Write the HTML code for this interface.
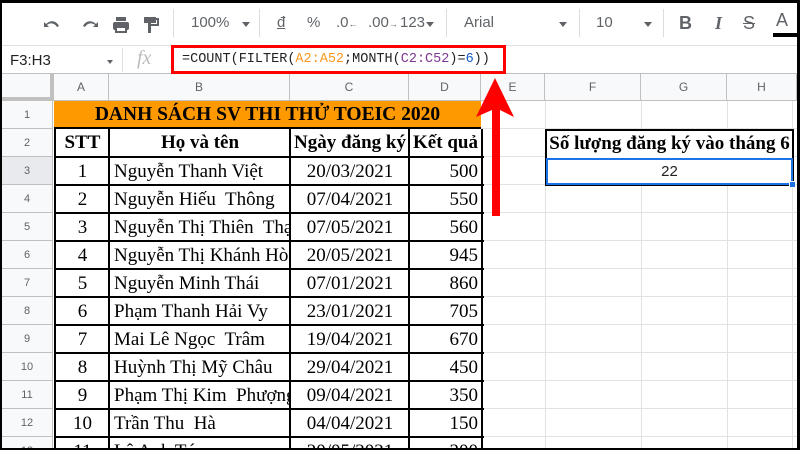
<!DOCTYPE html><html><head><meta charset="utf-8"><style>
*{margin:0;padding:0;box-sizing:border-box}
body{width:800px;height:450px;overflow:hidden;background:#000;position:relative;font-family:"Liberation Sans",sans-serif}
#app{position:absolute;left:2px;top:3px;width:795px;height:445px;background:#fff;overflow:hidden}
.a{position:absolute}
.tb{color:#5f6368;font-size:15px}
.ch{position:absolute;top:71px;height:27px;background:#f8f9fa;border-right:1px solid #c0c0c0;border-bottom:1px solid #c0c0c0;color:#5f6368;font-size:12px;text-align:center;line-height:27px}
.rh{position:absolute;left:0;width:51px;height:28px;background:#f8f9fa;border-right:1px solid #c0c0c0;border-bottom:1px solid #c0c0c0;color:#5f6368;font-size:11px;text-align:center;line-height:28px}
.c{position:absolute;height:28px;font-family:"Liberation Serif",serif;font-size:19px;line-height:28px;white-space:pre;overflow:hidden;color:#000}
</style></head><body><div id="app">
<div class="a" style="left:0;top:0;width:795px;height:42px;background:#fff"></div>
<svg class="a" style="left:38px;top:10px" width="130" height="22" viewBox="0 0 130 22" fill="#5f6368">
<path d="M4 9 L4 14 L9 14 L7 12 C9 10 14 9 17 14 L19 13 C16 7 10 7 6 11Z"/>
<path d="M58 9 L58 14 L53 14 L55 12 C53 10 48 9 45 14 L43 13 C46 7 52 7 56 11Z"/>
<rect x="73" y="9" width="16" height="8" rx="2"/><rect x="76" y="4" width="10" height="4"/><rect x="76" y="14" width="10" height="5" fill="#fff" stroke="#5f6368" stroke-width="2"/>
<path d="M104 4h12v6h-12z M108 10h3v3h-3z M108 13h3v7h-3z"/><path d="M116 6h2v6h-8v2" fill="none" stroke="#5f6368" stroke-width="2"/>
</svg>
<div class="a" style="left:171px;top:6px;width:1px;height:28px;background:#ddd"></div>
<div class="a tb" style="left:189px;top:11px">100%</div>
<div class="a" style="left:240px;top:19px;border:4px solid transparent;border-top:5px solid #5f6368"></div>
<div class="a" style="left:257px;top:6px;width:1px;height:28px;background:#ddd"></div>
<div class="a tb" style="left:275px;top:11px;text-decoration:underline">đ</div>
<div class="a tb" style="left:305px;top:11px">%</div>
<div class="a tb" style="left:334px;top:11px">.0<span style="font-size:9px">←</span></div>
<div class="a tb" style="left:366px;top:11px">.00<span style="font-size:9px">→</span></div>
<div class="a tb" style="left:398px;top:11px">123</div>
<div class="a" style="left:424px;top:19px;border:4px solid transparent;border-top:5px solid #5f6368"></div>
<div class="a" style="left:444px;top:6px;width:1px;height:28px;background:#ddd"></div>
<div class="a tb" style="left:462px;top:11px">Arial</div>
<div class="a" style="left:557px;top:19px;border:4px solid transparent;border-top:5px solid #5f6368"></div>
<div class="a" style="left:577px;top:6px;width:1px;height:28px;background:#ddd"></div>
<div class="a tb" style="left:594px;top:11px">10</div>
<div class="a" style="left:642px;top:19px;border:4px solid transparent;border-top:5px solid #5f6368"></div>
<div class="a" style="left:661px;top:6px;width:1px;height:28px;background:#ddd"></div>
<div class="a tb" style="left:677px;top:10px;font-size:18px;font-weight:bold">B</div>
<div class="a tb" style="left:713px;top:10px;font-size:18px;font-style:italic;font-family:'Liberation Serif',serif;font-weight:bold">I</div>
<div class="a tb" style="left:741px;top:10px;font-size:18px;text-decoration:line-through">S</div>
<div class="a tb" style="left:774px;top:7px;font-size:18px">A</div>
<div class="a" style="left:771px;top:30px;width:24px;height:4px;background:#000"></div>
<div class="a" style="left:0;top:42px;width:795px;height:29px;background:#fff;border-top:1px solid #e0e0e0;border-bottom:1px solid #c0c0c0"></div>
<div class="a" style="left:8px;top:49px;font-size:15px;color:#222">F3:H3</div>
<div class="a" style="left:105px;top:57px;border:3px solid transparent;border-top:4px solid #5f6368"></div>
<div class="a" style="left:120px;top:45px;width:1px;height:24px;background:#e0e0e0"></div>
<div class="a" style="left:135px;top:44px;font-family:'Liberation Serif',serif;font-style:italic;font-size:20px;color:#bbb">fx</div>
<div class="a" style="left:169px;top:42px;width:335px;height:29px;border:3px solid #f00"></div>
<div class="a" style="left:180px;top:49px;font-family:'Liberation Mono',monospace;font-size:13.5px;color:#222;white-space:nowrap">=COUNT(FILTER(<span style="color:#f7981d">A2:A52</span>;MONTH(<span style="color:#7e3794">C2:C52</span>)=<span style="color:#1155cc">6</span>))</div>
<div class="ch" style="left:0;width:52px;border-right:4px solid #c0c0c0;border-bottom:4px solid #c0c0c0"></div>
<div class="ch" style="left:52px;width:55px">A</div>
<div class="ch" style="left:107px;width:181px">B</div>
<div class="ch" style="left:288px;width:119px">C</div>
<div class="ch" style="left:407px;width:72px">D</div>
<div class="ch" style="left:479px;width:64px">E</div>
<div class="ch" style="left:543px;width:96px">F</div>
<div class="ch" style="left:639px;width:86px">G</div>
<div class="ch" style="left:725px;width:70px">H</div>
<svg class="a" style="left:0;top:98px" width="795" height="350">
<g stroke="#e2e2e2" stroke-width="1">
<line x1="543.5" y1="0" x2="543.5" y2="350"/><line x1="639.5" y1="0" x2="639.5" y2="350"/><line x1="725.5" y1="0" x2="725.5" y2="350"/><line x1="790.5" y1="0" x2="790.5" y2="350"/>
<line x1="479" y1="27.5" x2="795" y2="27.5"/><line x1="479" y1="55.5" x2="795" y2="55.5"/><line x1="479" y1="83.5" x2="795" y2="83.5"/><line x1="479" y1="111.5" x2="795" y2="111.5"/><line x1="479" y1="139.5" x2="795" y2="139.5"/><line x1="479" y1="167.5" x2="795" y2="167.5"/><line x1="479" y1="195.5" x2="795" y2="195.5"/><line x1="479" y1="223.5" x2="795" y2="223.5"/><line x1="479" y1="251.5" x2="795" y2="251.5"/><line x1="479" y1="279.5" x2="795" y2="279.5"/><line x1="479" y1="307.5" x2="795" y2="307.5"/><line x1="479" y1="335.5" x2="795" y2="335.5"/>
</g></svg>
<div class="rh" style="top:98px">1</div><div class="rh" style="top:126px">2</div><div class="rh" style="top:154px;background:#e8eaed">3</div><div class="rh" style="top:182px">4</div><div class="rh" style="top:210px">5</div><div class="rh" style="top:238px">6</div><div class="rh" style="top:266px">7</div><div class="rh" style="top:294px">8</div><div class="rh" style="top:322px">9</div><div class="rh" style="top:350px">10</div><div class="rh" style="top:378px">11</div><div class="rh" style="top:406px">12</div><div class="rh" style="top:434px">13</div>
<div class="c" style="left:52px;top:98px;width:427px;background:#ff9900;text-align:center;font-weight:bold;font-size:19.5px;border-bottom:2px solid #000">DANH SÁCH SV THI THỬ TOEIC 2020</div>
<svg class="a" style="left:52px;top:126px" width="430" height="330"><g stroke="#000" stroke-width="2">
<line x1="1" y1="0" x2="1" y2="330"/><line x1="55" y1="0" x2="55" y2="330"/><line x1="236" y1="0" x2="236" y2="330"/><line x1="355" y1="0" x2="355" y2="330"/><line x1="428" y1="-28" x2="428" y2="330"/>
<line x1="0" y1="28" x2="430" y2="28"/><line x1="0" y1="56" x2="430" y2="56"/><line x1="0" y1="84" x2="430" y2="84"/><line x1="0" y1="112" x2="430" y2="112"/><line x1="0" y1="140" x2="430" y2="140"/><line x1="0" y1="168" x2="430" y2="168"/><line x1="0" y1="196" x2="430" y2="196"/><line x1="0" y1="224" x2="430" y2="224"/><line x1="0" y1="252" x2="430" y2="252"/><line x1="0" y1="280" x2="430" y2="280"/><line x1="0" y1="308" x2="430" y2="308"/>
</g></svg>
<div class="c" style="left:54px;top:126px;width:53px;text-align:center;font-weight:bold">STT</div>
<div class="c" style="left:108px;top:126px;width:180px;text-align:center;font-weight:bold">Họ và tên</div>
<div class="c" style="left:289px;top:126px;width:118px;text-align:center;font-weight:bold">Ngày đăng ký</div>
<div class="c" style="left:408px;top:126px;width:71px;text-align:center;font-weight:bold">Kết quả</div>
<div id="rows"></div>
<div class="a" style="left:543px;top:126px;width:249px;height:57px;border:2px solid #000;background:#fff"></div>
<div class="c" style="left:543px;top:127px;width:249px;text-align:center;font-weight:bold">Số lượng đăng ký vào tháng 6</div>
<div class="a" style="left:544px;top:155px;width:247px;height:27px;border:2px solid #1a73e8;text-align:center;font-size:15px;line-height:23px;color:#222">22</div>
<div class="a" style="left:787px;top:178px;width:7px;height:7px;background:#1a73e8;border:1px solid #fff"></div>
<svg class="a" style="left:460px;top:70px" width="70" height="150"><path d="M33 5 L52 44 L38 37 L38 143 L30 143 L30 37 L14 44Z" fill="#f00"/></svg>
</div>
<script>
var d=[["1","Nguyễn Thanh Việt","20/03/2021","500"],["2","Nguyễn Hiếu  Thông","07/04/2021","550"],["3","Nguyễn Thị Thiên  Thạch","07/05/2021","560"],["4","Nguyễn Thị Khánh Hòa","20/05/2021","945"],["5","Nguyễn Minh Thái","07/01/2021","860"],["6","Phạm Thanh Hải Vy","23/01/2021","705"],["7","Mai Lê Ngọc  Trâm","19/04/2021","670"],["8","Huỳnh Thị Mỹ Châu","29/04/2021","450"],["9","Phạm Thị Kim  Phượng","09/04/2021","350"],["10","Trần Thu  Hà","04/04/2021","150"],["11","Lê Anh Tú","20/05/2021","300"]];
var h="";d.forEach(function(r,i){var t=155+i*28;
h+='<div class="c" style="left:54px;top:'+t+'px;width:53px;text-align:center">'+r[0]+'</div>'+
'<div class="c" style="left:112px;top:'+t+'px;width:176px">'+r[1]+'</div>'+
'<div class="c" style="left:289px;top:'+t+'px;width:118px;text-align:center">'+r[2]+'</div>'+
'<div class="c" style="left:408px;top:'+t+'px;width:68px;text-align:right">'+r[3]+'</div>';});
document.getElementById("rows").outerHTML=h;
</script>
</body></html>
